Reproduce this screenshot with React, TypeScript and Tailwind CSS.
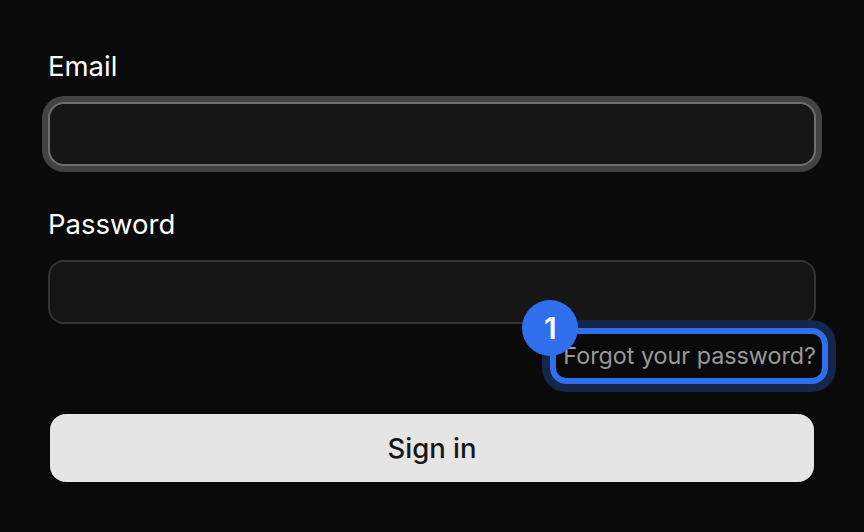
export default function App() {
  return (
    <div className="h-[532px] w-[864px] overflow-hidden bg-[#0a0a0a] px-12 pt-[46px] font-['Inter',sans-serif] text-white">
      <form className="flex flex-col">
        <label className="text-[27.5px] leading-10">Email</label>
        <div className="mt-4 h-16 rounded-2xl border-2 border-[#6f6f6f] bg-[#161616] shadow-[0_0_0_6px_#434343]" />
        <label className="mt-[38px] text-[27.5px] leading-10">Password</label>
        <div className="mt-4 h-16 rounded-2xl border-2 border-[#333333] bg-[#161616]" />
        <div className="mt-[14px] flex justify-end">
          <div className="relative">
            <a className="block text-[23.3px] leading-9 text-[#999999]">Forgot your password?</a>
            <span className="absolute -left-[13px] -right-[12px] -top-[10px] -bottom-[10px] rounded-2xl border-[6px] border-[#2f6fed] shadow-[0_0_0_8px_#14274a]" />
            <span className="absolute -left-[41px] -top-[38px] flex h-14 w-14 items-center justify-center rounded-full bg-[#2f6fed] text-[30px] font-semibold">1</span>
          </div>
        </div>
        <button className="mx-0.5 mt-10 h-[68px] rounded-2xl bg-[#e5e5e5] pt-0.5 text-[27.5px] font-medium text-[#171717]">Sign in</button>
      </form>
    </div>
  );
}
